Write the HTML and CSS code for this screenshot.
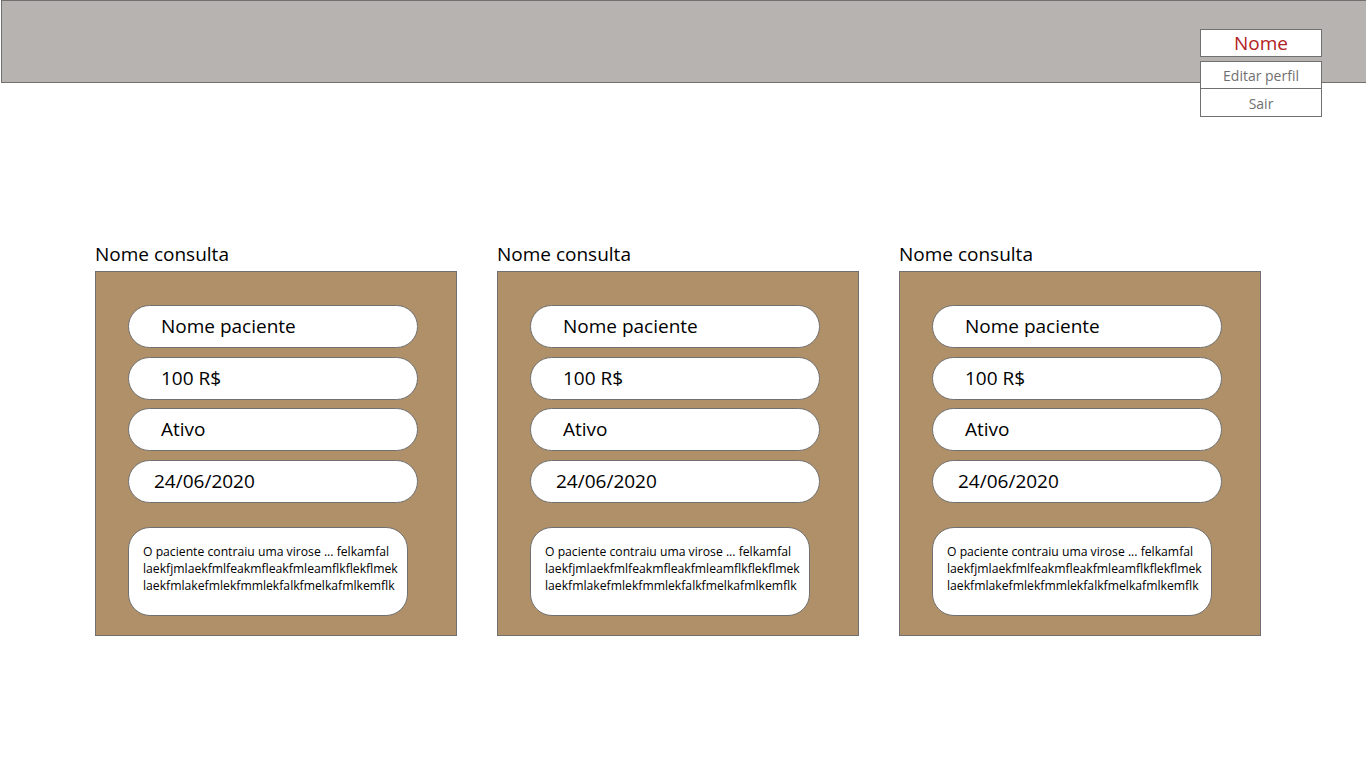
FILE: index.html
```html
<!DOCTYPE html>
<html lang="pt">
<head>
<meta charset="utf-8">
<link rel="stylesheet" href="styles.css">
</head>
<body>
<header class="topbar">
  <nav class="user-menu">
    <div class="menu-name">Nome</div>
    <div class="menu-item">Editar perfil</div>
    <div class="menu-item">Sair</div>
  </nav>
</header>
<main class="cards">
  <section class="consulta">
    <h2 class="consulta-title">Nome consulta</h2>
    <div class="card">
      <div class="pill pad-l">Nome paciente</div>
      <div class="pill pad-l">100 R$</div>
      <div class="pill pad-l">Ativo</div>
      <div class="pill pad-s">24/06/2020</div>
      <div class="desc">O paciente contraiu uma virose ... felkamfal<br>laekfjmlaekfmlfeakmfleakfmleamflkflekflmek<br>laekfmlakefmlekfmmlekfalkfmelkafmlkemflk</div>
    </div>
  </section>
  <section class="consulta">
    <h2 class="consulta-title">Nome consulta</h2>
    <div class="card">
      <div class="pill pad-l">Nome paciente</div>
      <div class="pill pad-l">100 R$</div>
      <div class="pill pad-l">Ativo</div>
      <div class="pill pad-s">24/06/2020</div>
      <div class="desc">O paciente contraiu uma virose ... felkamfal<br>laekfjmlaekfmlfeakmfleakfmleamflkflekflmek<br>laekfmlakefmlekfmmlekfalkfmelkafmlkemflk</div>
    </div>
  </section>
  <section class="consulta">
    <h2 class="consulta-title">Nome consulta</h2>
    <div class="card">
      <div class="pill pad-l">Nome paciente</div>
      <div class="pill pad-l">100 R$</div>
      <div class="pill pad-l">Ativo</div>
      <div class="pill pad-s">24/06/2020</div>
      <div class="desc">O paciente contraiu uma virose ... felkamfal<br>laekfjmlaekfmlfeakmfleakfmleamflkflekflmek<br>laekfmlakefmlekfmmlekfalkfmelkafmlkemflk</div>
    </div>
  </section>
</main>
</body>
</html>
```
FILE: styles.css
```css
* { box-sizing: border-box; }
body {
  margin: 0;
  background: #ffffff;
  font-family: "Open Sans", "Noto Sans", sans-serif;
  color: #000;
}
.topbar {
  position: relative;
  margin-left: 1px;
  height: 83px;
  background: #b7b3b1;
  border: 1px solid #707070;
  border-right: none;
}
.user-menu {
  position: absolute;
  left: 1198px;
  top: 28px;
  width: 122px;
  display: flex;
  flex-direction: column;
}
.menu-name {
  height: 28px;
  background: #fff;
  border: 1px solid #707070;
  color: #b22222;
  font-size: 19px;
  line-height: 26px;
  text-align: center;
  margin-bottom: 4px;
}
.menu-item {
  height: 28px;
  background: #fff;
  border: 1px solid #707070;
  color: #707070;
  font-size: 14px;
  line-height: 28px;
  text-align: center;
}
.menu-item + .menu-item { border-top: none; line-height: 29px; }
.cards {
  display: flex;
  gap: 40px;
  padding: 158px 0 0 95px;
}
.consulta { width: 362px; }
.consulta-title {
  margin: 0 0 6px;
  font-size: 19px;
  font-weight: 400;
  line-height: 26px;
  height: 24px;
}
.card {
  height: 365px;
  background: #b09068;
  border: 1px solid #707070;
  padding: 33px 0 0 32px;
  display: flex;
  flex-direction: column;
  align-items: flex-start;
}
.pill {
  width: 290px;
  height: 43px;
  background: #fff;
  border: 1px solid #707070;
  border-radius: 21.5px;
  font-size: 19px;
  line-height: 41px;
  margin-bottom: 8.7px;
}
.pad-l { padding-left: 32px; }
.pad-s { padding-left: 25px; }
.desc {
  margin-top: 15px;
  width: 280px;
  height: 89px;
  background: #fff;
  border: 1px solid #707070;
  border-radius: 22px;
  padding: 15px 0 0 14px;
  font-size: 12.2px;
  line-height: 17px;
  white-space: nowrap;
}
```
